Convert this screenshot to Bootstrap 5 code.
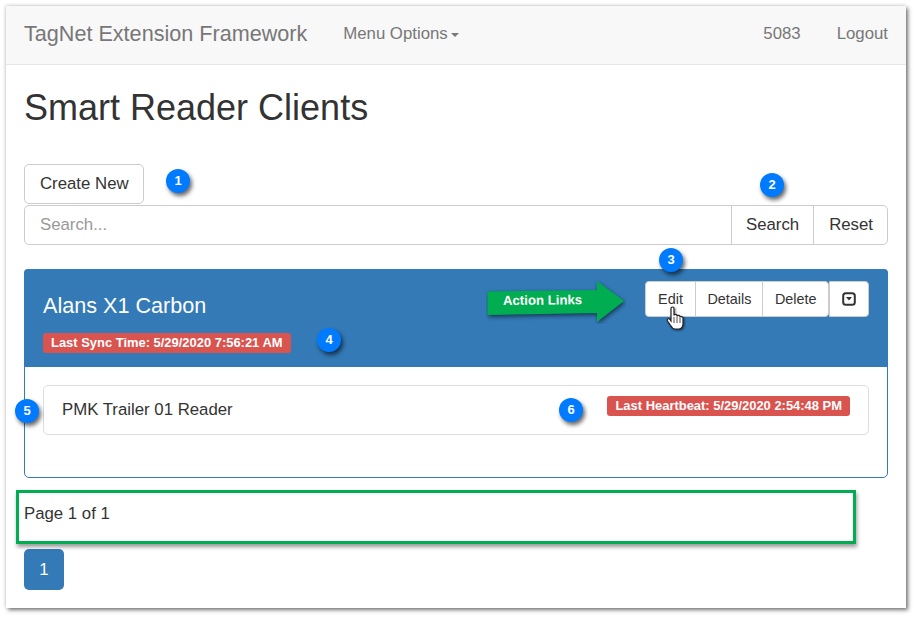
<!DOCTYPE html>
<html lang="en">
<head>
<meta charset="utf-8">
<title>Smart Reader Clients</title>
<link rel="stylesheet" href="https://cdn.jsdelivr.net/npm/bootstrap@5.3.0/dist/css/bootstrap.min.css">
<style>
html,body{height:100%;overflow:hidden}
body{background:#fff;padding:6px 0 0 6px;font-family:"Liberation Sans",Arial,sans-serif;font-size:16.8px;color:#333;line-height:1.43}
.shot-frame{position:relative;width:900px;height:602px;background:#fff;box-shadow:2px 2px 4px rgba(0,0,0,.55),-1px -1px 3px rgba(0,0,0,.12)}
.top-bar{height:59px;background:#f8f8f8;border-bottom:1px solid #e7e7e7;padding:0 18px 2px;color:#777}
.top-brand{font-size:21.6px;color:#777;margin-right:36px;text-decoration:none}
.top-link{color:#777;text-decoration:none;font-size:16.8px}
.top-gap{margin-right:36px}
.top-caret{display:inline-block;width:0;height:0;margin-left:3px;vertical-align:middle;border-top:4px solid #777;border-left:4px solid transparent;border-right:4px solid transparent}
.page-body{padding:0 18px}
.page-title{font-size:36px;font-weight:400;color:#333;line-height:40px;margin:23px 0 36px;font-family:inherit}
.ref-btn{font-size:16.8px;line-height:24px;padding:7px 15px;color:#333;background:#fff;border:1px solid #ccc;border-radius:5px}
.create-btn{padding-right:14px}
.search-row{margin-top:1px;height:40px}
.search-box{font-size:16.8px;line-height:24px;padding:7px 15px;border:1px solid #ccc;border-radius:5px 0 0 5px;color:#333;box-shadow:none}
.search-box::placeholder{color:#999}
.search-row .ref-btn{border-radius:0;margin-left:-1px;height:40px;padding:7px 14px}
.search-row .ref-btn:last-child{border-radius:0 5px 5px 0;padding-left:15px}
.client-panel{margin-top:24px;height:209px;border:1px solid #337ab7;border-radius:5px;--bs-card-bg:#fff}
.client-head{height:98px;background:#337ab7;color:#fff;padding:12px 19px 0;border-radius:4px 4px 0 0;margin:-1px -1px 0}
.client-name{font-size:21.6px;line-height:24px;margin:13px 0 12px;font-weight:400}
.red-tag{display:inline-block;background:#d9534f;color:#fff;font-size:12.95px;font-weight:700;line-height:15px;padding:2px 8px 3px;border-radius:3px;white-space:nowrap}
.act-group .ref-btn{font-size:14.4px;line-height:20px;padding:7px 12px;border-radius:0;margin-left:-1px;height:36px}
.act-group .ref-btn:first-child{border-radius:4px 0 0 4px;margin-left:0}
.act-group .ref-btn:last-child{border-radius:0 4px 4px 0}
.act-group .act-edit{padding:7px 12.500px}
.act-group .act-details{padding:7px 11px}
.act-group .act-delete{padding:7px 11.500px}
.act-group .act-last{border-radius:4px;margin-left:-1px;padding:7px 12px;display:flex;align-items:center}
.reader-row{margin:18px 18px 0;height:50px;border:1px solid #ddd;border-radius:5px;padding:0 18px;color:#333}
.reader-row .red-tag{position:relative;top:-4px}
.page-note{margin-top:24px;height:24px;line-height:24px}
.page-one{display:block;width:40px;height:41px;margin-top:23px;background:#337ab7;color:#fff;line-height:41px;text-align:center;border-radius:5px;text-decoration:none}
.note-dot{position:absolute;width:24px;height:24px;border-radius:50%;background:#007bff;color:#fff;font-size:13px;font-weight:700;line-height:24px;text-align:center;box-shadow:2px 3px 4px rgba(0,0,0,.6)}
.note-frame{position:absolute;left:10px;top:484px;width:840px;height:54px;border:3px solid #00ad50;box-shadow:1px 3px 4px rgba(0,0,0,.4)}
.note-arrow{position:absolute;left:480px;top:274px;width:140px;height:44px}
.note-arrow text{font-family:"Liberation Sans",Arial,sans-serif;font-size:13.2px;font-weight:700;fill:#fff}
.note-hand{position:absolute;left:660px;top:300px;width:20px;height:26px}
</style>
</head>
<body>
<div class="shot-frame">
  <nav class="top-bar d-flex align-items-center">
    <a class="top-brand" href="#">TagNet Extension Framework</a>
    <a class="top-link" href="#">Menu Options<span class="top-caret"></span></a>
    <div class="ms-auto d-flex">
      <a class="top-link top-gap" href="#">5083</a>
      <a class="top-link" href="#">Logout</a>
    </div>
  </nav>
  <main class="page-body">
    <h1 class="page-title">Smart Reader Clients</h1>
    <a class="btn ref-btn create-btn d-inline-block" href="#">Create New</a>
    <div class="search-row d-flex">
      <input class="form-control search-box flex-grow-1" placeholder="Search...">
      <button class="btn ref-btn" type="button">Search</button>
      <button class="btn ref-btn" type="button">Reset</button>
    </div>
    <section class="card client-panel">
      <div class="client-head d-flex justify-content-between">
        <div>
          <h3 class="client-name">Alans X1 Carbon</h3>
          <span class="red-tag">Last Sync Time: 5/29/2020 7:56:21 AM</span>
        </div>
        <div class="d-flex gap-0 align-items-start">
          <div class="act-group d-flex">
            <a class="btn ref-btn act-edit" href="#">Edit</a>
            <a class="btn ref-btn act-details" href="#">Details</a>
            <a class="btn ref-btn act-delete" href="#">Delete</a>
          </div>
          <div class="act-group d-flex">
            <button class="btn ref-btn act-last" type="button" aria-label="Expand">
              <svg width="14" height="14" viewBox="0 0 14 14"><rect x="1.2" y="1.2" width="11.6" height="11.6" rx="2.5" fill="#fff" stroke="#333" stroke-width="2"/><path d="M4 5h6L7 8.5z" fill="#333"/></svg>
            </button>
          </div>
        </div>
      </div>
      <div class="reader-row d-flex align-items-center justify-content-between">
        <span>PMK Trailer 01 Reader</span>
        <span class="red-tag">Last Heartbeat: 5/29/2020 2:54:48 PM</span>
      </div>
    </section>
    <div class="page-note">Page 1 of 1</div>
    <a class="page-one" href="#">1</a>
  </main>

  <div class="note-frame"></div>
  <span class="note-dot" style="left:160px;top:163px">1</span>
  <span class="note-dot" style="left:754px;top:167px">2</span>
  <span class="note-dot" style="left:653px;top:242px">3</span>
  <span class="note-dot" style="left:311px;top:322px">4</span>
  <span class="note-dot" style="left:9px;top:393px">5</span>
  <span class="note-dot" style="left:553px;top:392px">6</span>
  <svg class="note-arrow" viewBox="0 0 140 44">
    <path d="M1.500 11.500 L111 10 L111 1 L138 21 L111 42 L111 33 L1.500 35z" fill="#00ad50" style="filter:drop-shadow(1px 2px 2px rgba(0,0,0,.55))"/>
    <text x="17" y="25" transform="rotate(-.6 17 25)">Action Links</text>
  </svg>
  <svg class="note-hand" viewBox="0 0 20 26">
    <path d="M5 2.500c0-2 3-2 3 0v7c0-1.500 3-1.500 3 0v1c0-1.500 3-1.500 3 0v1c0-1.500 3-1 3 .5v6c0 3-2 5-4 5H9c-2 0-3-1-4-3L1.500 15c-1-2 1-3 2-2L5 15z" fill="#fff" stroke="#222" stroke-width="1.200" style="filter:drop-shadow(1px 1px 1px rgba(0,0,0,.5))"/>
    <path d="M8 11v6M11 11v6M14 12v5" stroke="#222" stroke-width=".8" fill="none"/>
  </svg>
</div>
</body>
</html>
